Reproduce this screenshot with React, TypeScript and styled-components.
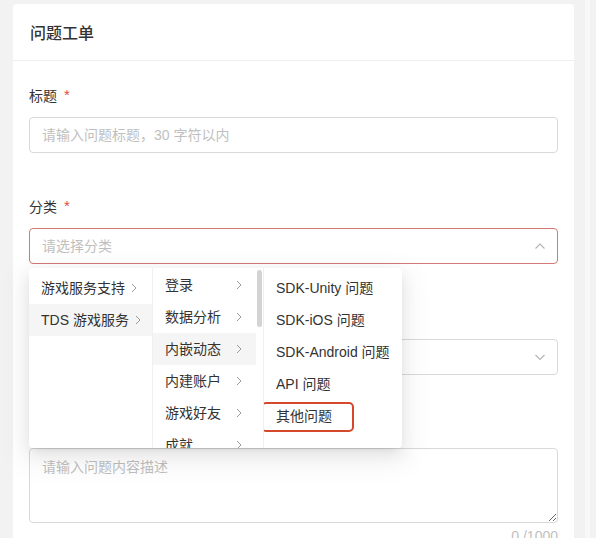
import React, { useEffect, useRef } from "react";
import styled, { createGlobalStyle } from "styled-components";

const GlobalStyle = createGlobalStyle`
  html, body { margin: 0; padding: 0; overflow: hidden; background: #f2f2f2; }
  body {
    font-family: "Liberation Sans", "Noto Sans CJK SC", sans-serif;
    font-size: 14px;
    color: #333;
  }
  * { box-sizing: border-box; }
`;

const Page = styled.div`
  display: flex;
  align-items: flex-start;
  height: 538px;
  padding: 4px 0 0 13px;
`;

const Card = styled.section`
  width: 561px;
  flex-shrink: 0;
  min-height: 600px;
  background: #fff;
  border-radius: 4px;
`;

const PageTrack = styled.div`
  width: 5px;
  margin-left: 11px;
  align-self: stretch;
  margin-top: -4px;
  background: #f8f8f8;
`;

const CardHeader = styled.header`
  height: 57px;
  display: flex;
  align-items: center;
  padding: 0 17px;
  border-bottom: 1px solid #efefef;
  font-size: 16px;
  font-weight: 500;
  color: #333;
`;

const CardBody = styled.div`
  padding: 24px 16px 0;
`;

const FormItem = styled.div<{ $mb?: number }>`
  display: flex;
  flex-direction: column;
  margin-bottom: ${(p) => p.$mb ?? 43}px;
  position: relative;
`;

const Label = styled.label`
  display: flex;
  align-items: center;
  height: 22px;
  line-height: 22px;
  margin-bottom: 10px;
  color: #333;
`;

const Star = styled.span`
  color: #e24c3f;
  margin-left: 7px;
  font-size: 15px;
  line-height: 1;
  position: relative;
  top: -2px;
`;

const TextInput = styled.input`
  height: 36px;
  border: 1px solid #d9d9d9;
  border-radius: 4px;
  padding: 0 12px;
  font: inherit;
  color: #333;
  outline: none;
  &::placeholder { color: #bfbfbf; }
`;

const SelectWrap = styled.div`
  position: relative;
`;

const SelectBox = styled.div<{ $error?: boolean }>`
  height: 36px;
  display: flex;
  align-items: center;
  justify-content: space-between;
  padding: 0 11px 0 12px;
  border: 1px solid ${(p) => (p.$error ? "#d27a75" : "#d9d9d9")};
  border-radius: 4px;
  background: #fff;
`;

const Placeholder = styled.span`
  color: #bfbfbf;
  line-height: 22px;
`;

const Dropdown = styled.div`
  position: absolute;
  top: calc(100% + 4px);
  left: 0;
  z-index: 10;
  display: flex;
  background: #fff;
  border-radius: 4px;
  box-shadow: 0 3px 6px -4px rgba(0, 0, 0, 0.12), 0 6px 16px 0 rgba(0, 0, 0, 0.08),
    0 9px 28px 8px rgba(0, 0, 0, 0.05);
`;

const Column = styled.div<{ $width?: number }>`
  position: relative;
  height: 180px;
  ${(p) => (p.$width ? `width: ${p.$width}px;` : "min-width: 112px;")}
  border-right: 1px solid #f0f0f0;
  &:last-child { border-right: none; }
`;

const Menu = styled.ul<{ $gutter?: number }>`
  list-style: none;
  margin: 0;
  padding: 4px ${(p) => p.$gutter ?? 0}px 4px 0;
  height: 100%;
  overflow: hidden;
`;

const ScrollThumb = styled.span`
  position: absolute;
  right: 1px;
  top: 2px;
  width: 5px;
  height: 57px;
  border-radius: 3px;
  background: #d3d3d3;
`;

const Item = styled.li<{ $active?: boolean }>`
  position: relative;
  display: flex;
  align-items: center;
  padding: 5px 12px;
  line-height: 22px;
  white-space: nowrap;
  color: #333;
  background: ${(p) => (p.$active ? "#f5f5f5" : "transparent")};
`;

const ItemText = styled.span<{ $grow?: boolean }>`
  flex: ${(p) => (p.$grow ? "1 1 auto" : "0 0 auto")};
`;

const Expand = styled.span`
  display: inline-flex;
  justify-content: center;
  flex: 0 0 10px;
  margin-left: 4px;
`;

const Mark = styled.span`
  position: absolute;
  left: -3px;
  top: 2px;
  width: 93px;
  height: 30px;
  border: 2.5px solid #d5482c;
  border-radius: 5px;
  pointer-events: none;
`;

const TextArea = styled.textarea`
  height: 75px;
  padding: 7px 12px;
  border: 1px solid #d9d9d9;
  border-radius: 4px;
  font: inherit;
  line-height: 22px;
  color: #333;
  resize: vertical;
  outline: none;
  &::placeholder { color: #bfbfbf; }
`;

const Counter = styled.div`
  text-align: right;
  line-height: 22px;
  margin-top: 2px;
  color: #bfbfbf;
`;

const Chevron = ({ dir }: { dir: "up" | "down" }) => (
  <svg width="12" height="12" viewBox="0 0 12 12" fill="none">
    <path
      d={dir === "up" ? "M1.5 8.5L6 4l4.5 4.5" : "M1.5 4L6 8.5 10.5 4"}
      stroke="#b3b3b3"
      strokeWidth="1.1"
    />
  </svg>
);

const Arrow = () => (
  <Expand>
    <svg width="6" height="10" viewBox="0 0 6 10" fill="none">
      <path d="M1 1l4 4-4 4" stroke="#9a9a9a" strokeWidth="1" />
    </svg>
  </Expand>
);

const level1 = ["游戏服务支持", "TDS 游戏服务"];
const level2 = [
  "登录",
  "数据分析",
  "内嵌动态",
  "内建账户",
  "游戏好友",
  "成就",
  "排行榜",
  "云存档",
  "公告",
  "防沉迷",
  "实名认证",
  "支付",
  "推送",
  "分享",
  "礼包码",
  "反作弊",
  "其他",
];
const level3 = ["SDK-Unity 问题", "SDK-iOS 问题", "SDK-Android 问题", "API 问题", "其他问题"];

export default function App() {
  const col2 = useRef<HTMLUListElement>(null);
  useEffect(() => {
    if (col2.current) col2.current.scrollTop = 3;
  }, []);

  return (
    <>
      <GlobalStyle />
      <Page>
        <Card>
          <CardHeader>问题工单</CardHeader>
          <CardBody>
            <FormItem>
              <Label>
                标题<Star>*</Star>
              </Label>
              <TextInput placeholder="请输入问题标题，30 字符以内" />
            </FormItem>

            <FormItem>
              <Label>
                分类<Star>*</Star>
              </Label>
              <SelectWrap>
                <SelectBox $error>
                  <Placeholder>请选择分类</Placeholder>
                  <Chevron dir="up" />
                </SelectBox>
                <Dropdown>
                  <Column $width={124}>
                    <Menu>
                      {level1.map((t, i) => (
                        <Item key={t} $active={i === 1}>
                          <ItemText>{t}</ItemText>
                          <Arrow />
                        </Item>
                      ))}
                    </Menu>
                  </Column>
                  <Column $width={111}>
                    <Menu $gutter={7} ref={col2}>
                      {level2.map((t, i) => (
                        <Item key={t} $active={i === 2}>
                          <ItemText $grow>{t}</ItemText>
                          <Arrow />
                        </Item>
                      ))}
                    </Menu>
                    <ScrollThumb />
                  </Column>
                  <Column>
                    <Menu>
                      {level3.map((t, i) => (
                        <Item key={t}>
                          <ItemText>{t}</ItemText>
                          {i === 4 && <Mark />}
                        </Item>
                      ))}
                    </Menu>
                  </Column>
                </Dropdown>
              </SelectWrap>
            </FormItem>

            <FormItem $mb={41}>
              <Label>
                游戏<Star>*</Star>
              </Label>
              <SelectBox>
                <Placeholder>请选择游戏</Placeholder>
                <Chevron dir="down" />
              </SelectBox>
            </FormItem>

            <FormItem>
              <Label>
                问题描述<Star>*</Star>
              </Label>
              <TextArea placeholder="请输入问题内容描述" />
              <Counter>0 /1000</Counter>
            </FormItem>
          </CardBody>
        </Card>
        <PageTrack />
      </Page>
    </>
  );
}
